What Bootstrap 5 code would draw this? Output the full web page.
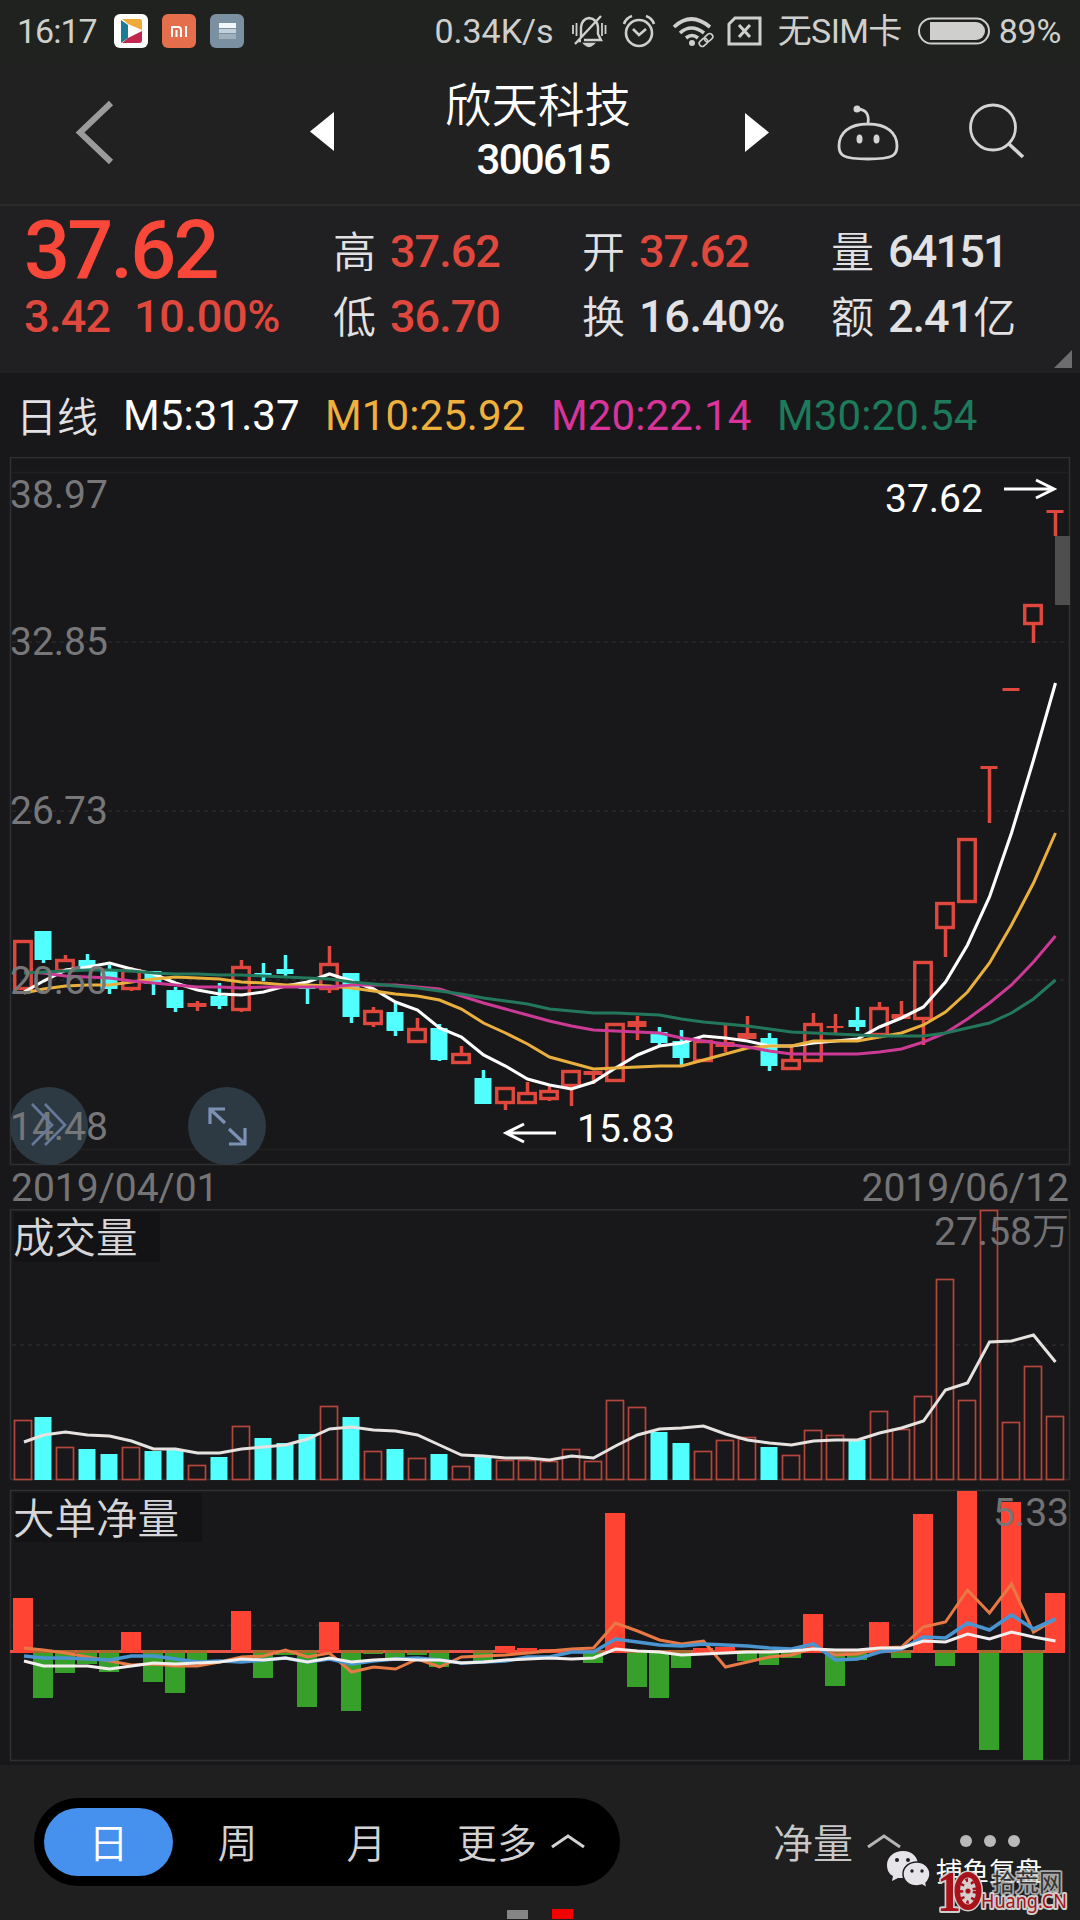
<!DOCTYPE html>
<html lang="zh-CN">
<head>
<meta charset="utf-8">
<meta name="viewport" content="width=device-width, initial-scale=1">
<title>欣天科技 300615</title>
<link href="https://cdn.jsdelivr.net/npm/bootstrap@5.3.0/dist/css/bootstrap.min.css" rel="stylesheet">
<style>
body{background:#18181a;color:#e2e2e4;font-family:Roboto,"Noto Sans CJK SC",sans-serif;width:1080px;height:1920px;overflow:hidden;line-height:1}
svg{display:block;flex:none}
.screen{width:1080px;height:1920px}
.cjk{font-family:"Noto Sans CJK SC",sans-serif;font-weight:350}
.statusbar{height:60px;background:#202220;color:#cfd0cd;font-size:34px;padding:2px 19px 0 17px}
.app-ic{width:34px;height:34px}
.topbar{height:146px;background:#212121;border-bottom:2px solid #2b2b2b}
.side-l{width:420px}.side-r{width:427px}
.title-box{padding:17px 0 0 3px}
.stock-name{font-size:46.5px;line-height:50px;color:#fff}
.stock-code{font-size:42px;line-height:42px;letter-spacing:-1.7px;color:#fff;font-weight:500;margin-top:12px;padding-left:10px}
.quote{height:167px;background:#201f21;padding:11px 0 0 24px}
.up{color:#e0483e}
.q-main{width:309px}
.q-price{font-size:81px;line-height:68px;letter-spacing:-2.8px;font-weight:500;color:#f9483a}
.q-sub{font-size:45px;line-height:65px;font-weight:500;letter-spacing:-.7px;margin-top:-1px}
.q-col{width:249px;padding-top:2px}
.q-row{height:65px;font-size:45px;font-weight:500;letter-spacing:-1px}
.q-row .cjk{font-size:43px;letter-spacing:0;position:relative;top:-2px}
.q-num{margin-left:14px}
.corner{right:8px;bottom:5px}
.legend-row{height:84px;font-size:42px;padding:2px 0 0 16px;letter-spacing:.1px}
.legend-row .cjk{font-size:41px;position:relative;top:-2px}
.dates{height:43px;font-size:39px;color:#757577;padding:2px 11px 0 11px}
.axis{font:39px Roboto,"Noto Sans CJK SC",sans-serif;fill:#77777a}
.tag{font:39px Roboto,sans-serif;fill:#fff}
.pane-title{font:350 41.5px "Noto Sans CJK SC",sans-serif;fill:#d6d6d8}
.toolbar{height:155px;background:#1f1f20;padding:33px 0 0 34px}
.pill{width:586px;height:88px;background:#000;border-radius:44px;padding:10px}
.seg{height:68px;width:129px;border-radius:34px;font-size:40px;color:#d2d2d2;flex:none;padding-bottom:3px}
.seg.active{background:#4690ee;color:#fff}
.seg-more{width:170px;margin-left:26px}
.net{font-size:40px;color:#c8c8c8;margin-left:153px;height:88px;padding-bottom:2px}
.mark-layer{left:880px;top:1840px}
.page-dots{left:507px;top:1909px}
</style>
<script src="https://cdn.jsdelivr.net/npm/bootstrap@5.3.0/dist/js/bootstrap.bundle.min.js"></script>
</head>
<body>
<div class="screen position-relative d-flex flex-column">

<header class="statusbar d-flex align-items-center justify-content-between">
  <div class="d-flex align-items-center">
    <span style="letter-spacing:-1px">16:17</span>
    <svg class="app-ic" style="margin-left:17px" viewBox="0 0 34 34"><rect width="34" height="34" rx="6" fill="#fff"/><path d="M7 6l7 5v13l-7 5z" fill="#1b7c94"/><path d="M8 5h18q2 0 2 3v8L14 10z" fill="#f0aa38"/><path d="M28 17v9q0 3-3 3H8l6-5z" fill="#c22750"/></svg>
    <svg class="app-ic" style="margin-left:14px" viewBox="0 0 34 34"><rect width="34" height="34" rx="6" fill="#e56f4c"/><path d="M10 23V13h6q3 0 3 3v7M14.500 16v7M24 12v11" stroke="#fff" stroke-width="2" fill="none"/></svg>
    <svg class="app-ic" style="margin-left:14px" viewBox="0 0 34 34"><rect width="34" height="34" rx="6" fill="#7b91a1"/><path d="M9 9h17v5H9z" fill="#f2f6f9"/><path d="M9 15h17v4H9z" fill="#c3d0d9"/><path d="M9 20h17v5H9z" fill="#9fb0bd"/></svg>
  </div>
  <div class="d-flex align-items-center">
    <span style="margin-right:17px">0.34K/s</span>
    <svg width="36" height="34" viewBox="0 0 36 34" fill="none" stroke="#cfd0cd" stroke-width="2.400"><path d="M10 24V13q1-8 8-9 8 1 9 9v7l3 6H13M7 27h3M4 30L30 2"/><path d="M14 30q4 4 8 0z" fill="#cfd0cd"/><path d="M2 11v9M5.500 9v13M31 9v13M34.500 11v9" stroke-width="1.800"/></svg>
    <svg width="34" height="34" style="margin-left:15px" viewBox="0 0 34 34" fill="none" stroke="#cfd0cd" stroke-width="2.600"><circle cx="17" cy="19" r="13"/><path d="M11 15l6 6 7-6M2 10q2-6 8-8M32 10q-2-6-8-8"/></svg>
    <svg width="42" height="34" style="margin-left:16px" viewBox="0 0 42 34" fill="none" stroke="#cfd0cd" stroke-width="3.600"><path d="M2 13q17-16 36 0M8 19q11-10 24 0M14 24q6-5 12 0"/><circle cx="20" cy="29" r="3" fill="#cfd0cd" stroke="none"/><g stroke-width="1.600" transform="rotate(-42 34 26)"><rect x="26" y="23" width="9" height="6" rx="3"/><rect x="33" y="23" width="9" height="6" rx="3"/></g></svg>
    <svg width="36" height="34" style="margin-left:13px" viewBox="0 0 36 34" fill="none" stroke="#cfd0cd" stroke-width="3"><path d="M8 4h25v26H2V10z"/><path d="M12 11l11 12M23 11L12 23"/></svg>
    <span style="margin:0 16px 0 15px;letter-spacing:-.6px">无SIM卡</span>
    <svg width="72" height="28" viewBox="0 0 72 28"><rect x="1" y="1.500" width="70" height="25" rx="12.500" fill="none" stroke="#cfd0cd" stroke-width="2"/><path d="M12 5h46a9 9 0 0 1 0 18H12z" fill="#cfd0cd"/></svg>
    <span style="margin-left:9px;letter-spacing:-.3px">89%</span>
  </div>
</header>

<nav class="topbar d-flex">
  <svg class="side-l" height="144" viewBox="0 60 420 144"><path d="M111 103L80 132.500 111 162" fill="none" stroke="#9b9b9b" stroke-width="6"/><path d="M334 112v39L310 131.500z" fill="#fff"/></svg>
  <div class="title-box flex-fill d-flex flex-column align-items-center text-center">
    <div class="stock-name cjk text-nowrap">欣天科技</div>
    <div class="stock-code">300615</div>
  </div>
  <svg class="side-r" height="144" viewBox="653 60 427 144"><path d="M745 113v39L769 132.500z" fill="#fff"/>
    <g fill="none" stroke="#d4d4d4" stroke-width="2.800"><path d="M868 124c-19 0-29 9-29 22 0 9 3 13 29 13s29-4 29-13c0-13-10-22-29-22zM868 123q2-13-10-14"/><circle cx="993" cy="127.500" r="22.500"/></g>
    <path d="M1009 144l14 13" stroke="#d4d4d4" stroke-width="3.600"/><circle cx="857" cy="109" r="3.500" fill="#d4d4d4"/><ellipse cx="859.500" cy="139" rx="3" ry="4.500" fill="#d4d4d4"/><ellipse cx="876.500" cy="139" rx="3" ry="4.500" fill="#d4d4d4"/></svg>
</nav>

<section class="quote d-flex position-relative">
  <div class="q-main">
    <div class="q-price">37.62</div>
    <div class="q-sub up d-flex"><span style="width:110px">3.42</span><span style="letter-spacing:-.3px">10.00%</span></div>
  </div>
  <div class="q-col"><div class="q-row d-flex align-items-center"><span class="cjk">高</span><span class="q-num up">37.62</span></div><div class="q-row d-flex align-items-center"><span class="cjk">低</span><span class="q-num up">36.70</span></div></div>
  <div class="q-col"><div class="q-row d-flex align-items-center"><span class="cjk">开</span><span class="q-num up">37.62</span></div><div class="q-row d-flex align-items-center"><span class="cjk">换</span><span class="q-num" style="letter-spacing:-.3px">16.40%</span></div></div>
  <div class="q-col"><div class="q-row d-flex align-items-center"><span class="cjk">量</span><span class="q-num" style="letter-spacing:-1.800px">64151</span></div><div class="q-row d-flex align-items-center"><span class="cjk">额</span><span class="q-num">2.41</span><span class="cjk">亿</span></div></div>
  <svg class="corner position-absolute" width="18" height="18"><path d="M18 0v18H0z" fill="#6d6c6f"/></svg>
</section>

<div class="legend-row d-flex align-items-center">
  <span class="cjk" style="width:107px">日线</span>
  <span class="text-white" style="width:202px">M5:31.37</span>
  <span style="width:226px;color:#f0b03c">M10:25.92</span>
  <span style="width:226px;color:#d8349a">M20:22.14</span>
  <span style="color:#1d7a5a">M30:20.54</span>
</div>

<svg id="price" width="1080" height="709" viewBox="0 457 1080 709"></svg>
<div class="dates d-flex justify-content-between align-items-center"><span>2019/04/01</span><span>2019/06/12</span></div>
<svg id="volume" width="1080" height="274" viewBox="0 1209 1080 274"></svg>
<svg id="net" width="1080" height="282" viewBox="0 1483 1080 282"></svg>

<footer class="toolbar d-flex align-items-start">
  <div class="pill d-flex align-items-center">
    <div class="seg active cjk d-flex align-items-center justify-content-center">日</div>
    <div class="seg cjk d-flex align-items-center justify-content-center">周</div>
    <div class="seg cjk d-flex align-items-center justify-content-center">月</div>
    <div class="seg seg-more cjk d-flex align-items-center">更多<svg width="36" height="16" style="margin-left:13px" viewBox="0 0 36 16"><path d="M2 14L18 3l16 11" fill="none" stroke="#d2d2d2" stroke-width="3"/></svg></div>
  </div>
  <div class="net cjk d-flex align-items-center">净量<svg width="36" height="16" style="margin-left:13px" viewBox="0 0 36 16"><path d="M2 14L18 3l16 11" fill="none" stroke="#b5b5b5" stroke-width="3"/></svg>
    <svg width="62" height="14" style="margin-left:57px" viewBox="0 0 62 14" fill="#b9b9b9"><circle cx="7" cy="7" r="6"/><circle cx="31" cy="7" r="6"/><circle cx="55" cy="7" r="6"/></svg></div>
</footer>

<svg class="mark-layer position-absolute" width="200" height="80" viewBox="880 1840 200 80">
  <g fill="#e6e4e8"><path d="M903 1851c-9 0-16 6-16 14 0 5 2 9 6 11l-1 5 6-3h6c2 0 14-6 14-13 0-8-6-14-15-14z"/><path d="M917 1862c-8 0-14 5-14 12s6 12 14 12l5-1 5 3-1-5c2-2 4-5 4-9 0-7-6-12-13-12z" stroke="#1f1f20" stroke-width="1.500"/></g>
  <g fill="#1f1f20"><circle cx="897" cy="1860" r="2"/><circle cx="908" cy="1860" r="2"/><circle cx="912" cy="1871" r="1.700"/><circle cx="922" cy="1871" r="1.700"/></g>
  <text x="936" y="1881" font-family="Noto Sans CJK SC" font-size="26.500" fill="#fff">捕鱼复盘</text>
  <g paint-order="stroke" stroke="#cfcfcf" stroke-linejoin="round">
    <text x="992" y="1891" font-family="Noto Sans CJK SC" font-size="23.500" fill="#333" stroke-width="3.500" stroke-opacity=".8">拾荒网</text>
    <text x="981" y="1908" font-family="Noto Sans" font-size="20" textLength="86" lengthAdjust="spacingAndGlyphs" fill="#a8121a" stroke-width="4">Huang.CN</text>
    <text x="937" y="1911" font-family="Liberation Serif" font-weight="700" font-size="58" textLength="24" lengthAdjust="spacingAndGlyphs" fill="#a8121a" stroke-width="4">1</text>
    <ellipse cx="968" cy="1891" rx="13.500" ry="19" fill="#a8121a" stroke-width="3"/>
  </g>
  <ellipse cx="968" cy="1891" rx="8" ry="13.500" fill="#d5cfcf"/><ellipse cx="968" cy="1891" rx="6.500" ry="11" fill="none" stroke="#a8121a" stroke-width="3.500" stroke-dasharray="2.500 4"/><circle cx="968" cy="1891" r="2.600" fill="#a8121a"/>
</svg>
<svg class="page-dots position-absolute" width="68" height="10"><rect y="1" width="21" height="9" fill="#858585"/><rect x="45" width="21" height="10" fill="#f40000"/></svg>
</div>

<script>
const N = 48, RED = '#e0483e', CYAN = '#52ffff';
const cx = i => i === 0 ? 23 : 21 + 22 * i;
const box = (x, y, w, h, a) => `<rect x="${x}" y="${y}" width="${w}" height="${h}" ${a}/>`;
const seg = (x1, y1, x2, y2, c, w, a = '') => `<path d="M${x1} ${y1}L${x2} ${y2}" stroke="${c}" stroke-width="${w}" ${a}/>`;
const poly = (ys, c, w) => `<polyline points="${ys.map((y, i) => (i ? 21.5 + 22 * i : 24) + ',' + y).join(' ')}" fill="none" stroke="${c}" stroke-width="${w}"/>`;
const dash = y => seg(12, y, 1069, y, '#29292b', 1.5, 'stroke-dasharray="4 4"');
const frame = (t, b) => box(10.5, t, 1059, b - t, 'fill="none" stroke="#303033" stroke-width="1.5"');

/* kind (r rising, c falling), high, body top, body bottom, low */
const candles = `r940,940,990,990 c931,931,960,963 r955,959,972,972 c954,960,971,971 c965,971,989,994 r967,969,990,991
c971,971,984,995 c987,990,1008,1012 r1001,1003,1007,1011 c983,996,1006,1009 r960,966,1011,1012 c963,973,975,981
c955,969,974,976 c986,987,989,1004 r946,963,990,993 c973,973,1017,1023 r1007,1010,1025,1027 c1003,1012,1031,1036
r1018,1028,1043,1043 c1024,1028,1060,1061 r1046,1053,1064,1064 c1070,1078,1104,1104 r1087,1087,1104,1110 r1082,1092,1104,1104
r1086,1090,1100,1101 r1070,1070,1087,1106 r1071,1071,1075,1084 r1023,1023,1082,1082 r1016,1021,1027,1040 c1027,1032,1043,1045
c1030,1041,1058,1066 r1040,1040,1062,1062 r1025,1042,1047,1052 r1016,1033,1039,1039 c1033,1038,1066,1071 r1047,1059,1070,1070
r1013,1023,1062,1062 r1014,1026,1028,1033 c1007,1020,1027,1031 r1002,1007,1036,1036 r1001,1014,1019,1019 r961,961,1020,1045
r902,902,929,957 r838,838,903,903 r766,766,769,823 r688,688,691,691 r604,604,625,643 r510,510,513,536`
  .split(/\s+/).map(s => [s[0], ...s.slice(1).split(',').map(Number)]);
const ma5 = [992,981,970,967,963,969,974,983,990,994,995,992,986,982,974,981,989,1002,1010,1028,1037,1055,1066,1079,1085,1089,1082,1068,1055,1046,1043,1036,1038,1041,1046,1046,1043,1041,1039,1027,1018,1007,982,945,897,833,760,683];
const ma10 = [993,989,986,985,985,982,979,977,978,979,982,983,985,985,986,988,991,994,996,1000,1009,1023,1033,1044,1057,1063,1069,1068,1067,1066,1066,1060,1054,1048,1046,1046,1041,1041,1041,1037,1033,1025,1012,992,963,925,883,833];
const ma20 = [972,973,976,977,978,981,983,985,987,987,988,987,987,987,987,985,985,985,987,989,996,1003,1009,1015,1021,1026,1030,1031,1032,1033,1038,1041,1044,1047,1051,1054,1054,1054,1054,1052,1049,1042,1033,1019,1003,985,962,936];
const ma30 = [973,972,971,970,970,971,973,974,974,975,975,976,977,978,979,982,984,986,988,991,994,998,1001,1004,1009,1011,1013,1013,1014,1015,1019,1022,1024,1026,1029,1032,1033,1034,1035,1036,1036,1036,1033,1028,1023,1013,999,980];

let s = frame(457.5, 1164.5) + seg(11, 472.5, 1069, 472.5, '#202022', 1.5) + seg(11, 1149.5, 1069, 1149.5, '#202022', 1.5) + [642, 811, 980].map(dash).join('');
candles.forEach(([k, h, t, b, l], i) => {
  const x = cx(i), c = k === 'r' ? RED : CYAN, thin = b - t < 8;
  if (h < t) s += seg(x + .5, h, x + .5, t + 1, c, 3.5);
  if (l > b) s += seg(x + .5, b - 1, x + .5, l, c, 3.5);
  if (k === 'c') s += box(x - 8.500, t, 17, b - t, `fill="${c}"`);
  else if (thin) s += box(x - (b - t < 4 ? 8.5 : 9.5), t, b - t < 4 ? 17 : 19, b - t, `fill="${c}"`);
  else s += box(x - 8.250, t + 1.500, 16.500, b - t - 3, `fill="none" stroke="${c}" stroke-width="3.4"`);
});
s += poly(ma5, '#fff', 3.1) + poly(ma10, '#eab03e', 3) + poly(ma20, '#cc3a96', 3) + poly(ma30, '#23785b', 3);
[[38.97, 508], [32.85, 655], [26.73, 824], ['20.60', 993.5]].forEach(([v, y]) => s += `<text class="axis" x="10" y="${y}">${v}</text>`);
s += '<circle cx="49" cy="1126" r="39" fill="#2d3a43"/><circle cx="227" cy="1126" r="39" fill="#2d3a43"/><text class="axis" x="10" y="1140">14.48</text>'
  + '<path d="M32 1104L52 1125 32 1145M45 1104L65 1125 45 1145" fill="none" stroke="#67799a" stroke-width="2.6"/>'
  + '<g fill="none" stroke="#7d90b5" stroke-width="3.2"><path d="M225 1123L210 1109M210 1124V1109H225M229 1129L245 1144M245 1128V1144H229"/></g>'
  + box(1055, 536, 15, 69, 'fill="#4e4e4e"')
  + '<g fill="none" stroke="#fff" stroke-width="3"><path d="M1004 489H1054M1036 480L1054 489 1036 498M556 1133H506M524 1124L506 1133 524 1142"/></g>'
  + '<text class="tag" x="885" y="512">37.62</text><text class="tag" x="577" y="1142">15.83</text>';
document.getElementById('price').innerHTML = s;

const vol = [1420,1417,1447,1449,1454,1447,1451,1450,1465,1457,1426,1438,1443,1434,1406,1417,1451,1449,1458,1454,1466,1457,1460,1460,1461,1449,1461,1400,1407,1432,1443,1451,1440,1437,1447,1455,1430,1435,1440,1411,1429,1396,1279,1400,1210,1422,1366,1416];
const volMa = [1442,1435,1432,1435,1436,1441,1449,1449,1453,1453,1449,1447,1445,1439,1429,1427,1430,1431,1435,1445,1455,1456,1458,1458,1460,1456,1458,1446,1435,1429,1428,1426,1434,1440,1443,1445,1441,1440,1440,1433,1428,1421,1390,1383,1342,1341,1335,1362];
s = frame(1209.8, 1479.5) + dash(1345) + box(14, 1212, 146, 50, 'fill="#131315"');
vol.forEach((t, i) => {
  const x = cx(i);
  s += candles[i][0] === 'c' ? box(x - 8.500, t, 17, 1480 - t, `fill="${CYAN}"`) : box(x - 8.500, t + .5, 17, 1479 - t, 'fill="#18181a" stroke="#b5463e" stroke-width="1.700"');
});
s += poly(volMa, '#e6e2e0', 3) + '<text class="pane-title" x="13" y="1253">成交量</text><text class="axis" x="1069" y="1245" text-anchor="end" opacity=".95">27.58<tspan font-size="37" font-weight="350">万</tspan></text>';
document.getElementById('volume').innerHTML = s;

/* bar ends; values above the zero line are inflow, below are outflow */
const flow = [1598,1698,1673,1664,1672,1632,1682,1693,1663,1653,1611,1678,1655,1707,1622,1711,1654,1658,1655,1667,1653,1661,1646,1648,1649,1649,1663,1513,1687,1698,1668,1648,1647,1661,1665,1658,1614,1686,1660,1622,1658,1514,1666,1491,1750,1502,1760,1593];
const f1 = [1648,1650,1653,1657,1661,1665,1664,1666,1666,1662,1657,1656,1650,1657,1653,1672,1667,1669,1659,1667,1657,1656,1655,1653,1651,1649,1648,1623,1631,1640,1644,1641,1667,1662,1657,1655,1648,1655,1654,1648,1647,1627,1622,1590,1613,1584,1632,1619];
const f2 = [1656,1658,1658,1659,1660,1656,1656,1659,1662,1661,1662,1660,1658,1662,1659,1664,1661,1659,1658,1660,1663,1662,1661,1657,1657,1652,1652,1639,1642,1645,1646,1644,1645,1646,1648,1649,1644,1660,1659,1652,1649,1637,1638,1623,1630,1615,1629,1619];
const f3 = [1661,1666,1666,1666,1669,1666,1663,1664,1663,1662,1659,1660,1658,1662,1658,1662,1660,1659,1660,1660,1663,1662,1660,1659,1658,1659,1658,1649,1651,1652,1655,1654,1653,1652,1652,1651,1649,1650,1650,1648,1648,1641,1642,1634,1639,1632,1637,1641];
s = frame(1490.5, 1760.5) + dash(1625.5) + box(14, 1493, 188, 49, 'fill="#131315"') + seg(10, 1651.5, 1065, 1651.5, '#e85548', 3);
flow.forEach((y, i) => {
  if (y < 1653) s += box(cx(i) - 10, y, 20, 1653 - y, 'fill="#ff4433"');
  else if (y > 1653) s += box(cx(i) - 10, 1652, 20, y - 1652, 'fill="#36a02a"') + box(cx(i) - 10, 1650, 20, 3, 'fill="#a8682e"');
});
s += poly(f1, '#e87945', 3) + poly(f2, '#4a94d0', 3.6) + poly(f3, '#f2eeee', 3)
  + '<text class="pane-title" x="13" y="1534">大单净量</text><text class="axis" x="1069" y="1526" text-anchor="end" opacity=".95">5.33</text>';
document.getElementById('net').innerHTML = s;
</script>
</body>
</html>
